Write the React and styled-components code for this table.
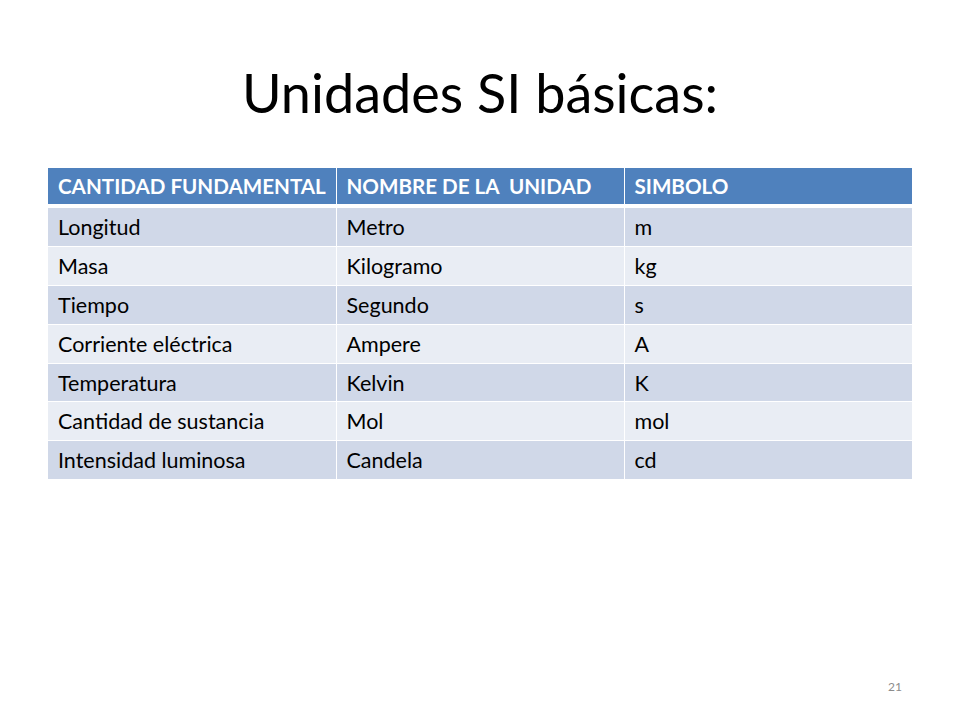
import React from 'react';
import styled, { createGlobalStyle } from 'styled-components';

const Global = createGlobalStyle`
  html, body {
    margin: 0;
    padding: 0;
    background: #fff;
  }
  body {
    font-family: Lato, "Open Sans", sans-serif;
  }
`;

const Slide = styled.div`
  width: 960px;
  height: 720px;
  display: flex;
  flex-direction: column;
  align-items: center;
  box-sizing: border-box;
  padding-top: 60px;
  position: relative;
`;

const Title = styled.h1`
  margin: 0;
  font-weight: 400;
  font-size: 54px;
  line-height: 66px;
  color: #000;
`;

const Table = styled.table`
  margin-top: 42px;
  width: 864px;
  border-collapse: collapse;
  table-layout: fixed;
  font-size: 21.5px;
`;

const Th = styled.th`
  background: #4f81bd;
  color: #fff;
  font-weight: 700;
  font-size: 20.6px;
  text-align: left;
  height: 36px;
  padding: 0 10px;
  border-left: 1px solid #fff;
  border-bottom: 4px solid #fff;
  white-space: nowrap;
  &:first-child { border-left: none; }
`;

const Td = styled.td`
  background: ${p => (p.$odd ? '#d0d8e8' : '#e9edf4')};
  color: #000;
  height: 37.9px;
  padding: 0 10px;
  border-left: 1px solid #fff;
  border-top: 1px solid #fff;
  white-space: nowrap;
  &:first-child { border-left: none; }
`;

const PageNum = styled.div`
  position: absolute;
  right: 58px;
  bottom: 26px;
  font-size: 12px;
  color: #8c8c8c;
`;

const rows = [
  ['Longitud', 'Metro', 'm'],
  ['Masa', 'Kilogramo', 'kg'],
  ['Tiempo', 'Segundo', 's'],
  ['Corriente eléctrica', 'Ampere', 'A'],
  ['Temperatura', 'Kelvin', 'K'],
  ['Cantidad de sustancia', 'Mol', 'mol'],
  ['Intensidad luminosa', 'Candela', 'cd'],
];

export default function App() {
  return (
    <>
      <Global />
      <Slide>
        <Title>Unidades SI básicas:</Title>
        <Table>
          <thead>
            <tr>
              <Th>CANTIDAD FUNDAMENTAL</Th>
              <Th>NOMBRE DE LA&nbsp; UNIDAD</Th>
              <Th>SIMBOLO</Th>
            </tr>
          </thead>
          <tbody>
            {rows.map((r, i) => (
              <tr key={i}>
                {r.map((c, j) => (
                  <Td key={j} $odd={i % 2 === 0}>{c}</Td>
                ))}
              </tr>
            ))}
          </tbody>
        </Table>
        <PageNum>21</PageNum>
      </Slide>
    </>
  );
}
